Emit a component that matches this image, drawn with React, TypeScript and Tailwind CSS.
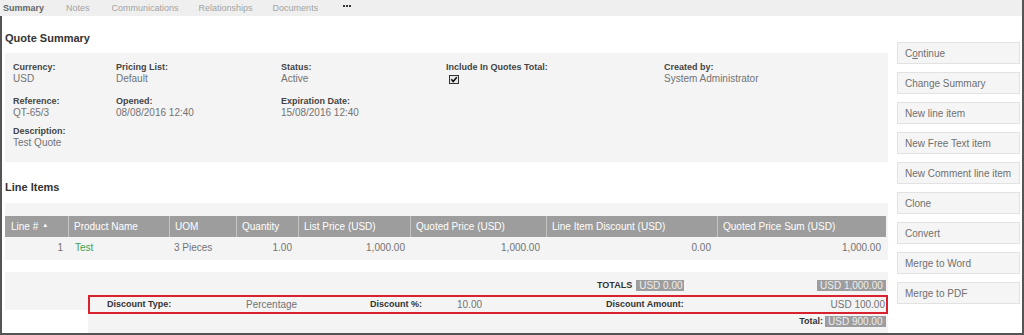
import React from "react";

const Field = ({ label, children, w }: { label: string; children?: React.ReactNode; w: string }) => (
  <div className={`${w} shrink-0`}>
    <div className="text-[9px] leading-[11px] font-bold text-[#444]">{label}</div>
    <div className="text-[10px] leading-[12px] text-[#737373] h-[12px]">{children}</div>
  </div>
);

const Checkbox = () => (
  <svg width="10" height="9" viewBox="0 0 10 9" className="ml-[3px] mt-[2px]">
    <rect x="0.5" y="0.5" width="9" height="8" fill="#e8e8e8" stroke="#333" />
    <path d="M2.3 4.2 L4.2 6.4 L7.8 2.2" fill="none" stroke="#111" strokeWidth="1.6" />
  </svg>
);

const buttons: React.ReactNode[] = [
  <span>C<u>o</u>ntinue</span>,
  "Change Summary",
  "New line item",
  "New Free Text item",
  "New Comment line item",
  "Clone",
  "Convert",
  "Merge to Word",
  "Merge to PDF",
];

export default function App() {
  return (
    <div className="w-[1024px] h-[335px] bg-white overflow-hidden border-r-2 border-b-2 border-[#555] font-['Liberation_Sans',Arial,sans-serif]">
      {/* tab bar */}
      <div className="h-[16px] bg-[#efefef] flex items-center text-[9px] leading-[11px]">
        <span className="ml-[3px] font-bold text-[#666]">Summary</span>
        <span className="ml-[22px] text-[#a3a3a3]">Notes</span>
        <span className="ml-[22px] text-[#a3a3a3]">Communications</span>
        <span className="ml-[20px] text-[#a3a3a3]">Relationships</span>
        <span className="ml-[20px] text-[#a3a3a3]">Documents</span>
        <span className="ml-[25px] flex gap-[1px] -mt-[4px]">
          <span className="w-[2px] h-[2px] bg-[#333]" />
          <span className="w-[2px] h-[2px] bg-[#333]" />
          <span className="w-[2px] h-[2px] bg-[#333]" />
        </span>
      </div>

      <div className="h-[317px] border-l-2 border-[#555] flex">
        {/* main */}
        <div className="ml-[3px] w-[883px] shrink-0 flex flex-col">
          <div className="pt-[16px] text-[11px] leading-[13px] font-bold text-[#333]">Quote Summary</div>

          <div className="mt-[8px] h-[109px] bg-[#f4f4f4] pt-[9px] pl-[8px]">
            <div className="flex">
              <Field label="Currency:" w="w-[103px]">USD</Field>
              <Field label="Pricing List:" w="w-[165px]">Default</Field>
              <Field label="Status:" w="w-[165px]">Active</Field>
              <Field label="Include In Quotes Total:" w="w-[218px]">
                <Checkbox />
              </Field>
              <Field label="Created by:" w="w-[200px]">System Administrator</Field>
            </div>
            <div className="flex mt-[9px]">
              <Field label="Reference:" w="w-[103px]">QT-65/3</Field>
              <Field label="Opened:" w="w-[165px]">08/08/2016 12:40</Field>
              <Field label="Expiration Date:" w="w-[165px]">15/08/2016 12:40</Field>
            </div>
            <div className="flex mt-[7px]">
              <Field label="Description:" w="w-[103px]">Test Quote</Field>
            </div>
          </div>

          <div className="mt-[19px] text-[11px] leading-[13px] font-bold text-[#333]">Line Items</div>

          <div className="mt-[9px] bg-[#f4f4f4] pt-[13px] pb-[2px] pr-[2px]">
            <div className="grid grid-cols-[63px_101px_67px_62px_112px_136px_171px_1fr] text-[10px]">
              <div className="h-[21px] bg-[#9d9d9d] text-white flex items-center pl-[6px]">
                Line #<span className="ml-[4px] text-[6px] leading-[6px] -mt-[3px]">▲</span>
              </div>
              {["Product Name", "UOM", "Quantity", "List Price (USD)", "Quoted Price (USD)", "Line Item Discount (USD)", "Quoted Price Sum (USD)"].map((h) => (
                <div key={h} className="h-[21px] bg-[#9d9d9d] text-white flex items-center pl-[5px] border-l border-[#c4c4c4]">
                  {h}
                </div>
              ))}
              <div className="h-[21px] flex items-center justify-end pr-[5px] text-[#737373]">1</div>
              <div className="h-[21px] flex items-center pl-[7px] text-[#45a045]">Test</div>
              <div className="h-[21px] flex items-center pl-[5px] text-[#737373]">3 Pieces</div>
              <div className="h-[21px] flex items-center justify-end pr-[6px] text-[#737373]">1.00</div>
              <div className="h-[21px] flex items-center justify-end pr-[5px] text-[#737373]">1,000.00</div>
              <div className="h-[21px] flex items-center justify-end pr-[6px] text-[#737373]">1,000.00</div>
              <div className="h-[21px] flex items-center justify-end pr-[6px] text-[#737373]">0.00</div>
              <div className="h-[21px] flex items-center justify-end pr-[5px] text-[#737373]">1,000.00</div>
            </div>
          </div>

          {/* totals */}
          <div className="mt-[12px] flex flex-1">
            <div className="w-[83px] shrink-0">
              <div className="h-[38px] bg-[#f4f4f4]" />
            </div>
            <div className="flex-1 bg-[#f4f4f4] flex flex-col">
              <div className="mt-[8px] h-[11px] flex items-center text-[10px] leading-[11px]">
                <span className="ml-[509px] text-[9px] font-bold text-[#333]">TOTALS</span>
                <span className="ml-[4px] w-[48px] h-[11px] bg-[#9d9d9d] text-[#eee] pl-[3px]">USD 0.00</span>
                <span className="ml-auto mr-[2px] w-[69px] h-[11px] bg-[#9d9d9d] text-[#eee] pl-[3px]">USD 1,000.00</span>
              </div>
              <div className="mt-[4px] h-[19px] border-2 border-[#d8232f] flex items-center text-[10px]">
                <span className="ml-[17px] w-[139px] text-[9px] font-bold text-[#333]">Discount Type:</span>
                <span className="w-[124px] text-[#737373]">Percentage</span>
                <span className="w-[87px] text-[9px] font-bold text-[#333]">Discount %:</span>
                <span className="w-[149px] text-[#737373]">10.00</span>
                <span className="text-[9px] font-bold text-[#333]">Discount Amount:</span>
                <span className="ml-auto mr-[1px] text-[#737373]">USD 100.00</span>
              </div>
              <div className="mt-[2px] h-[11px] flex items-center justify-end text-[10px] leading-[11px]">
                <span className="text-[9px] font-bold text-[#333]">Total:</span>
                <span className="ml-[2px] mr-[2px] w-[61px] h-[11px] bg-[#9d9d9d] text-[#eee] pl-[3px]">USD 900.00</span>
              </div>
            </div>
          </div>
        </div>

        {/* actions */}
        <div className="ml-[9px] w-[123px] shrink-0 pt-[26px] flex flex-col gap-[8px]">
          {buttons.map((b, i) => (
            <div key={i} className="h-[22px] bg-[#f5f5f5] border border-[#e2e2e2] flex items-center pl-[7px] text-[10px] text-[#707070] whitespace-nowrap">
              {b}
            </div>
          ))}
        </div>
      </div>
    </div>
  );
}
